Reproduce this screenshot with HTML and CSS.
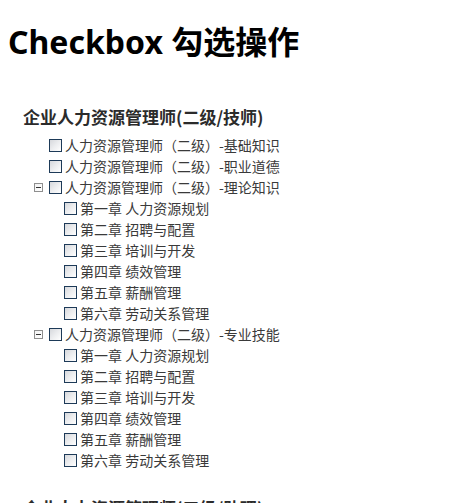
FILE: index.html
```html
<!DOCTYPE html>
<html lang="zh-CN">
<head>
<meta charset="utf-8">
<title>Checkbox 勾选操作</title>
<link rel="stylesheet" href="styles.css">
</head>
<body>
<h1 class="title">Checkbox 勾选操作</h1>

<section class="group">
  <h2 class="group-title">企业人力资源管理师(二级/技师)</h2>
  <ul class="tree">
    <li class="row lvl1"><span class="spacer"></span><input type="checkbox" class="cb"><span class="label">人力资源管理师（二级）-基础知识</span></li>
    <li class="row lvl1"><span class="spacer"></span><input type="checkbox" class="cb"><span class="label">人力资源管理师（二级）-职业道德</span></li>
    <li class="row lvl1"><span class="toggle"></span><input type="checkbox" class="cb"><span class="label">人力资源管理师（二级）-理论知识</span></li>
    <li class="row lvl2"><input type="checkbox" class="cb"><span class="label">第一章 人力资源规划</span></li>
    <li class="row lvl2"><input type="checkbox" class="cb"><span class="label">第二章 招聘与配置</span></li>
    <li class="row lvl2"><input type="checkbox" class="cb"><span class="label">第三章 培训与开发</span></li>
    <li class="row lvl2"><input type="checkbox" class="cb"><span class="label">第四章 绩效管理</span></li>
    <li class="row lvl2"><input type="checkbox" class="cb"><span class="label">第五章 薪酬管理</span></li>
    <li class="row lvl2"><input type="checkbox" class="cb"><span class="label">第六章 劳动关系管理</span></li>
    <li class="row lvl1"><span class="toggle"></span><input type="checkbox" class="cb"><span class="label">人力资源管理师（二级）-专业技能</span></li>
    <li class="row lvl2"><input type="checkbox" class="cb"><span class="label">第一章 人力资源规划</span></li>
    <li class="row lvl2"><input type="checkbox" class="cb"><span class="label">第二章 招聘与配置</span></li>
    <li class="row lvl2"><input type="checkbox" class="cb"><span class="label">第三章 培训与开发</span></li>
    <li class="row lvl2"><input type="checkbox" class="cb"><span class="label">第四章 绩效管理</span></li>
    <li class="row lvl2"><input type="checkbox" class="cb"><span class="label">第五章 薪酬管理</span></li>
    <li class="row lvl2"><input type="checkbox" class="cb"><span class="label">第六章 劳动关系管理</span></li>
  </ul>
</section>

<section class="group next">
  <h2 class="group-title">企业人力资源管理师(三级/助理)</h2>
</section>
</body>
</html>
```

FILE: styles.css
```css
html, body {
  margin: 0;
  padding: 0;
  background: #fff;
}
body {
  font-family: "Noto Sans", "Noto Sans CJK SC", sans-serif;
  color: #333;
}
.title {
  margin: 22px 0 0;
  padding-left: 8px;
  font-size: 32px;
  line-height: 40px;
  font-weight: 700;
  color: #000;
}
.group {
  margin-top: 43px;
}
.group.next {
  margin-top: 25px;
}
.group-title {
  margin: 0;
  padding-left: 23px;
  font-family: "Noto Sans CJK SC", sans-serif;
  font-size: 17px;
  line-height: 24px;
  font-weight: 700;
  color: #2b2b2b;
}
.tree {
  list-style: none;
  margin: 6px 0 0;
  padding: 0;
}
.row {
  display: flex;
  align-items: center;
  height: 21px;
  font-family: "Noto Sans CJK SC", sans-serif;
  font-size: 14px;
  line-height: 21px;
  color: #3a3a3a;
}
.lvl1 {
  padding-left: 34px;
}
.lvl2 {
  padding-left: 64px;
}
.spacer,
.toggle {
  flex: none;
  width: 9px;
  height: 9px;
  margin-right: 6px;
  box-sizing: border-box;
}
.toggle {
  position: relative;
  border: 1px solid #8f8f8f;
  background: linear-gradient(135deg, #f2f2f2, #ffffff);
}
.toggle::after {
  content: "";
  position: absolute;
  left: 1px;
  top: 3px;
  width: 5px;
  height: 1px;
  background: #333;
}
.cb {
  -webkit-appearance: none;
  appearance: none;
  flex: none;
  width: 13px;
  height: 13px;
  margin: 0 3px 0 0;
  box-sizing: border-box;
  border: 1px solid #1d3a58;
  background: linear-gradient(135deg, #d6d8dc 0%, #ecedef 50%, #ffffff 100%);
}
.label {
  white-space: nowrap;
}
```
